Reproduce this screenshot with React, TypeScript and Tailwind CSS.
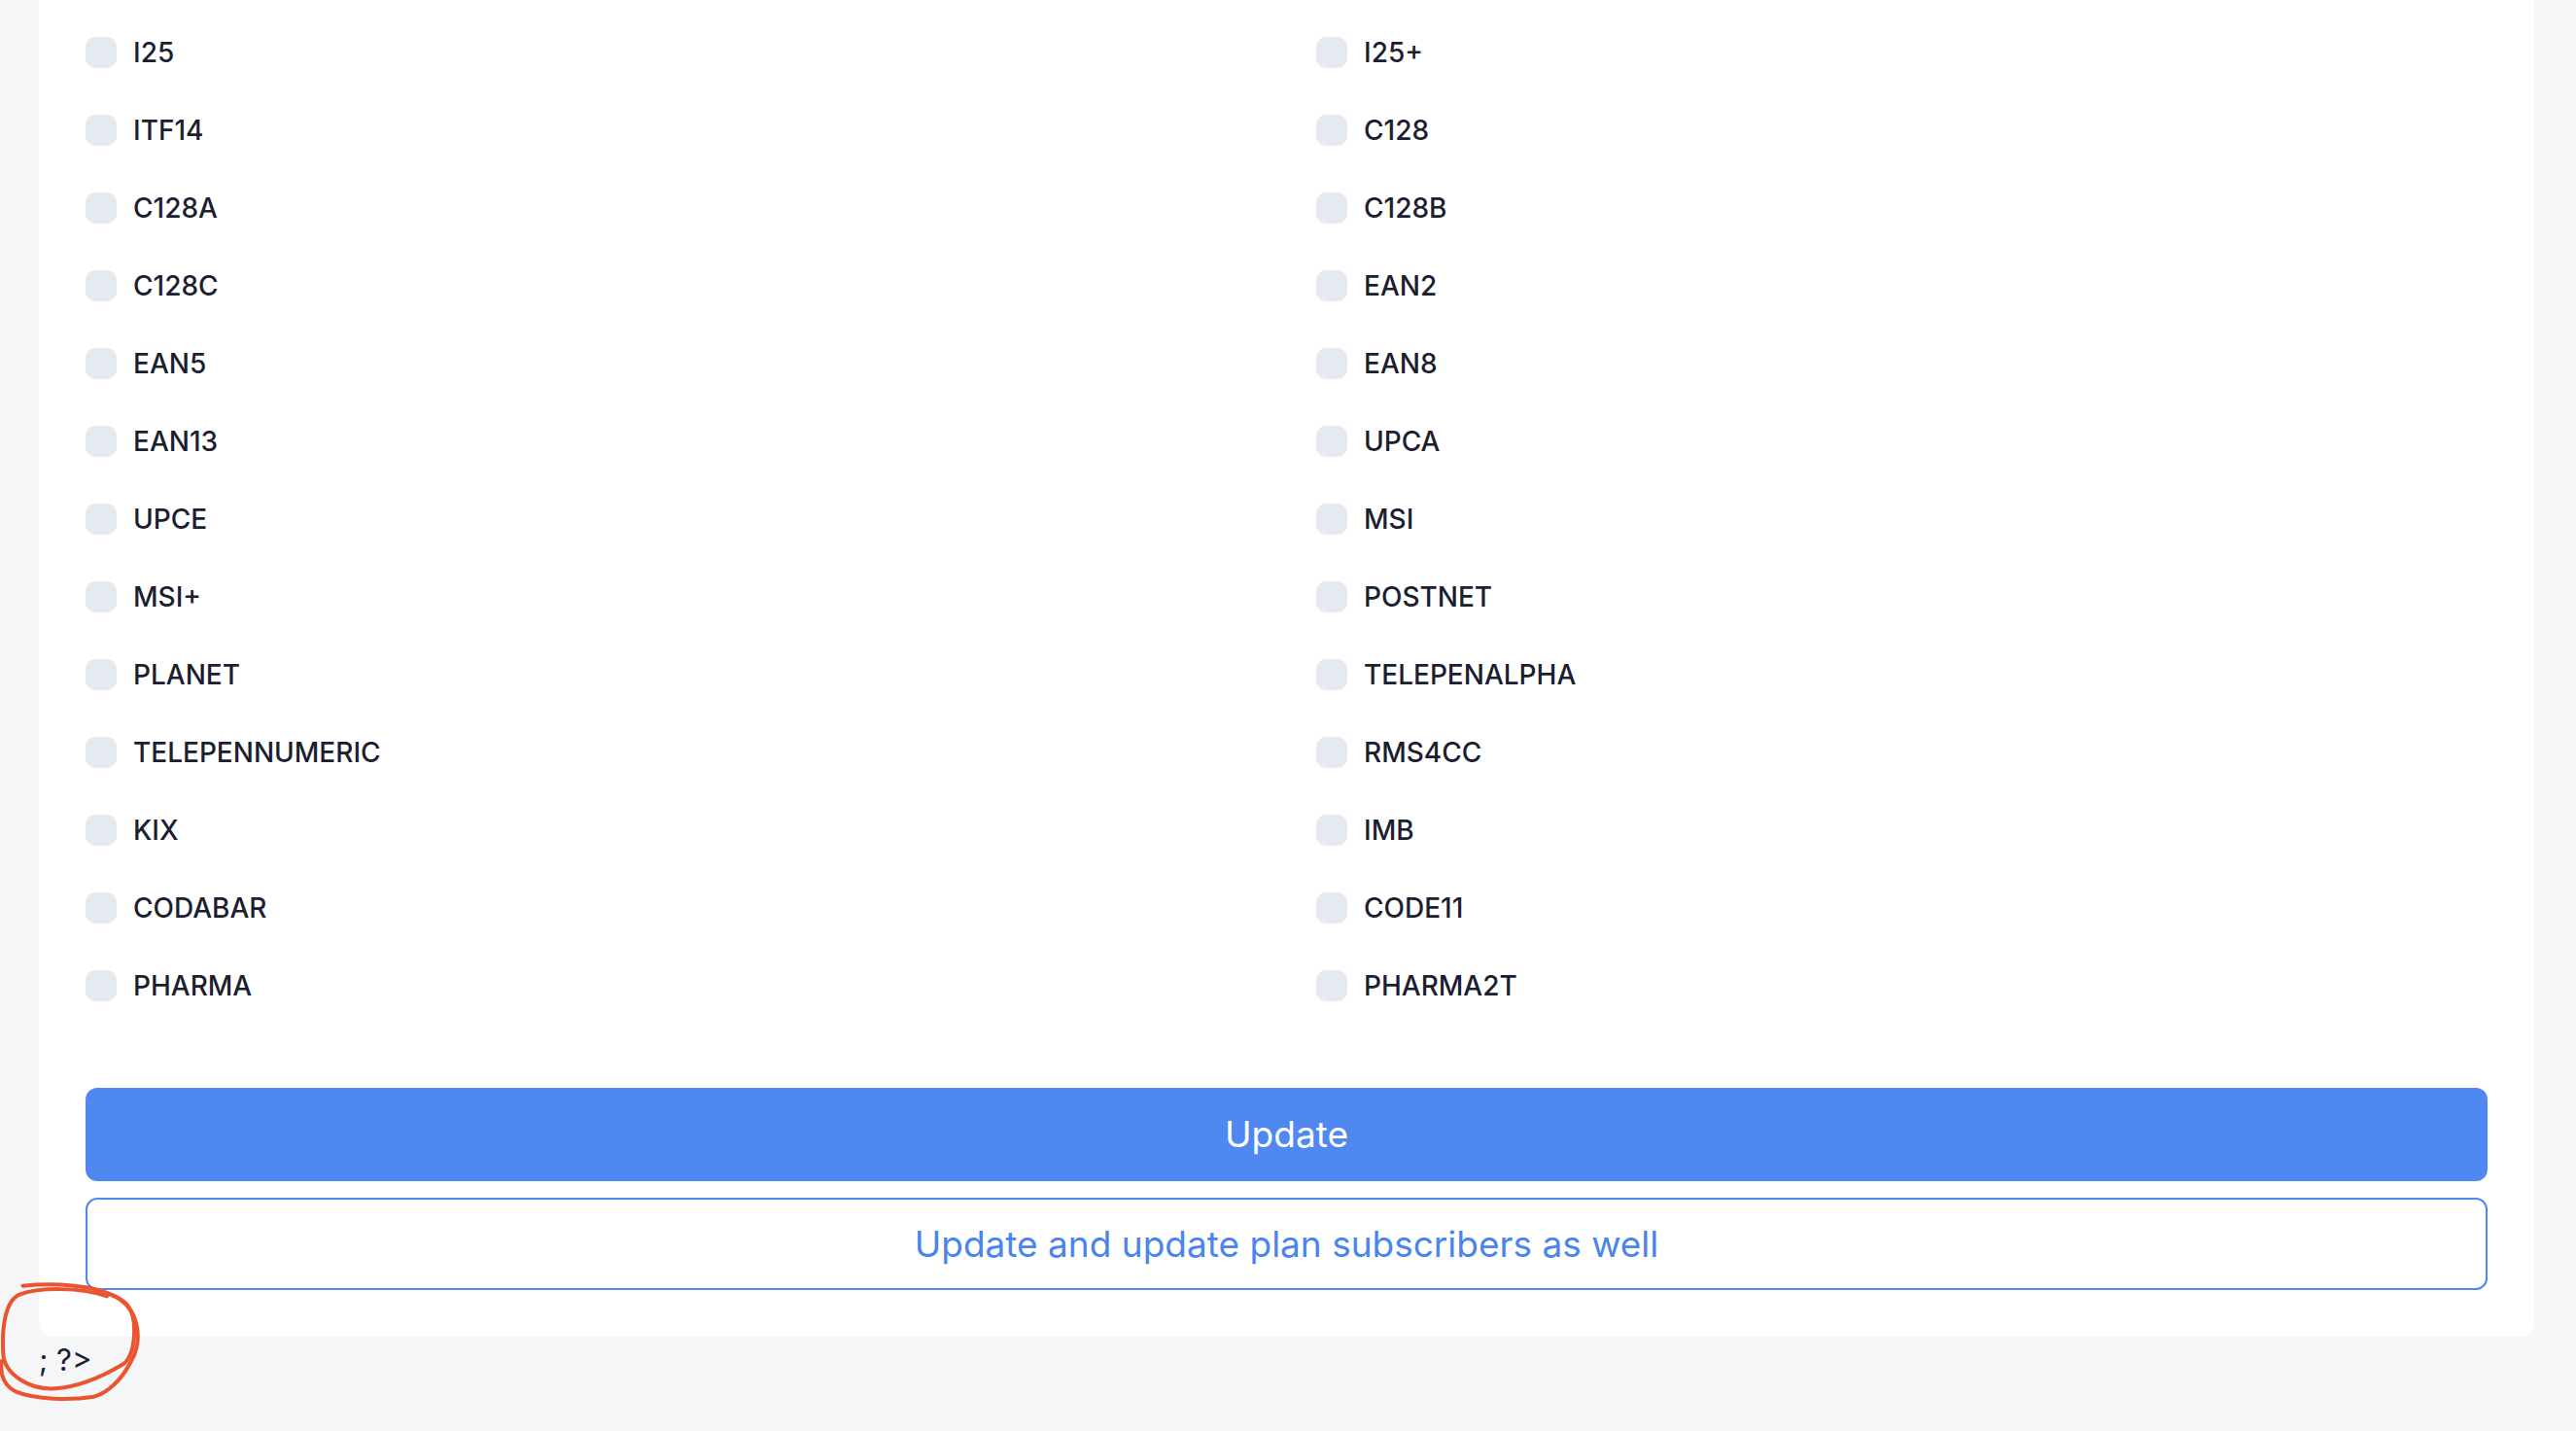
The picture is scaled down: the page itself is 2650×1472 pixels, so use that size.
const barcodeTypes = [
  'I25',
  'I25+',
  'ITF14',
  'C128',
  'C128A',
  'C128B',
  'C128C',
  'EAN2',
  'EAN5',
  'EAN8',
  'EAN13',
  'UPCA',
  'UPCE',
  'MSI',
  'MSI+',
  'POSTNET',
  'PLANET',
  'TELEPENALPHA',
  'TELEPENNUMERIC',
  'RMS4CC',
  'KIX',
  'IMB',
  'CODABAR',
  'CODE11',
  'PHARMA',
  'PHARMA2T',
]

function BarcodeOption({ label }: { label: string }) {
  return (
    <label className="flex h-[80px] cursor-pointer items-center gap-[17px]">
      <span className="size-[32px] shrink-0 rounded-[10px] bg-[#e5eaf1]" />
      <span className="text-[28px] font-medium text-[#1b2030]">{label}</span>
    </label>
  )
}

function Scribble() {
  return (
    <svg
      className="pointer-events-none absolute left-0 top-[1300px]"
      width={160}
      height={172}
      viewBox="0 0 480 516"
      fill="none"
      stroke="#ea5530"
      strokeWidth={12}
      strokeLinecap="round"
      strokeLinejoin="round"
    >
      <path d="M 330 100 C 250 72, 120 72, 60 95 C 15 115, 5 200, 10 280 C 15 340, 90 390, 170 385 C 250 380, 330 340, 380 310 C 420 280, 425 170, 395 130 C 370 100, 330 90, 300 85" />
      <path d="M 70 68 C 150 60, 300 60, 370 110 C 430 150, 440 240, 405 300 C 375 360, 330 400, 290 410 C 220 422, 110 420, 50 395 C 10 375, 0 340, 5 300" />
    </svg>
  )
}

export default function App() {
  return (
    <div
      className="relative min-h-[1472px] bg-[#f5f6f8] pl-[40px] pr-[43px]"
      style={{ fontFamily: 'Inter, "Noto Sans", sans-serif' }}
    >
      <div className="rounded-b-[14px] bg-white px-[48px] pb-[48px] pt-[14px]">
        <div className="grid grid-cols-2 gap-x-[61px]">
          {barcodeTypes.map((type) => (
            <BarcodeOption key={type} label={type} />
          ))}
        </div>

        <div className="mt-[65px] flex flex-col gap-[17px]">
          <button className="h-[96px] w-full rounded-[12px] bg-[#5088f2] text-[37px] text-white">
            Update
          </button>
          <button className="h-[95px] w-full rounded-[12px] border-2 border-[#5088f2] bg-white text-[37px] text-[#4a84ee]">
            Update and update plan subscribers as well
          </button>
        </div>
      </div>

      <p className="mt-[4px] text-[31px] leading-[40px] text-[#1b2030]">
        ; ?&gt;
      </p>

      <Scribble />
    </div>
  )
}
